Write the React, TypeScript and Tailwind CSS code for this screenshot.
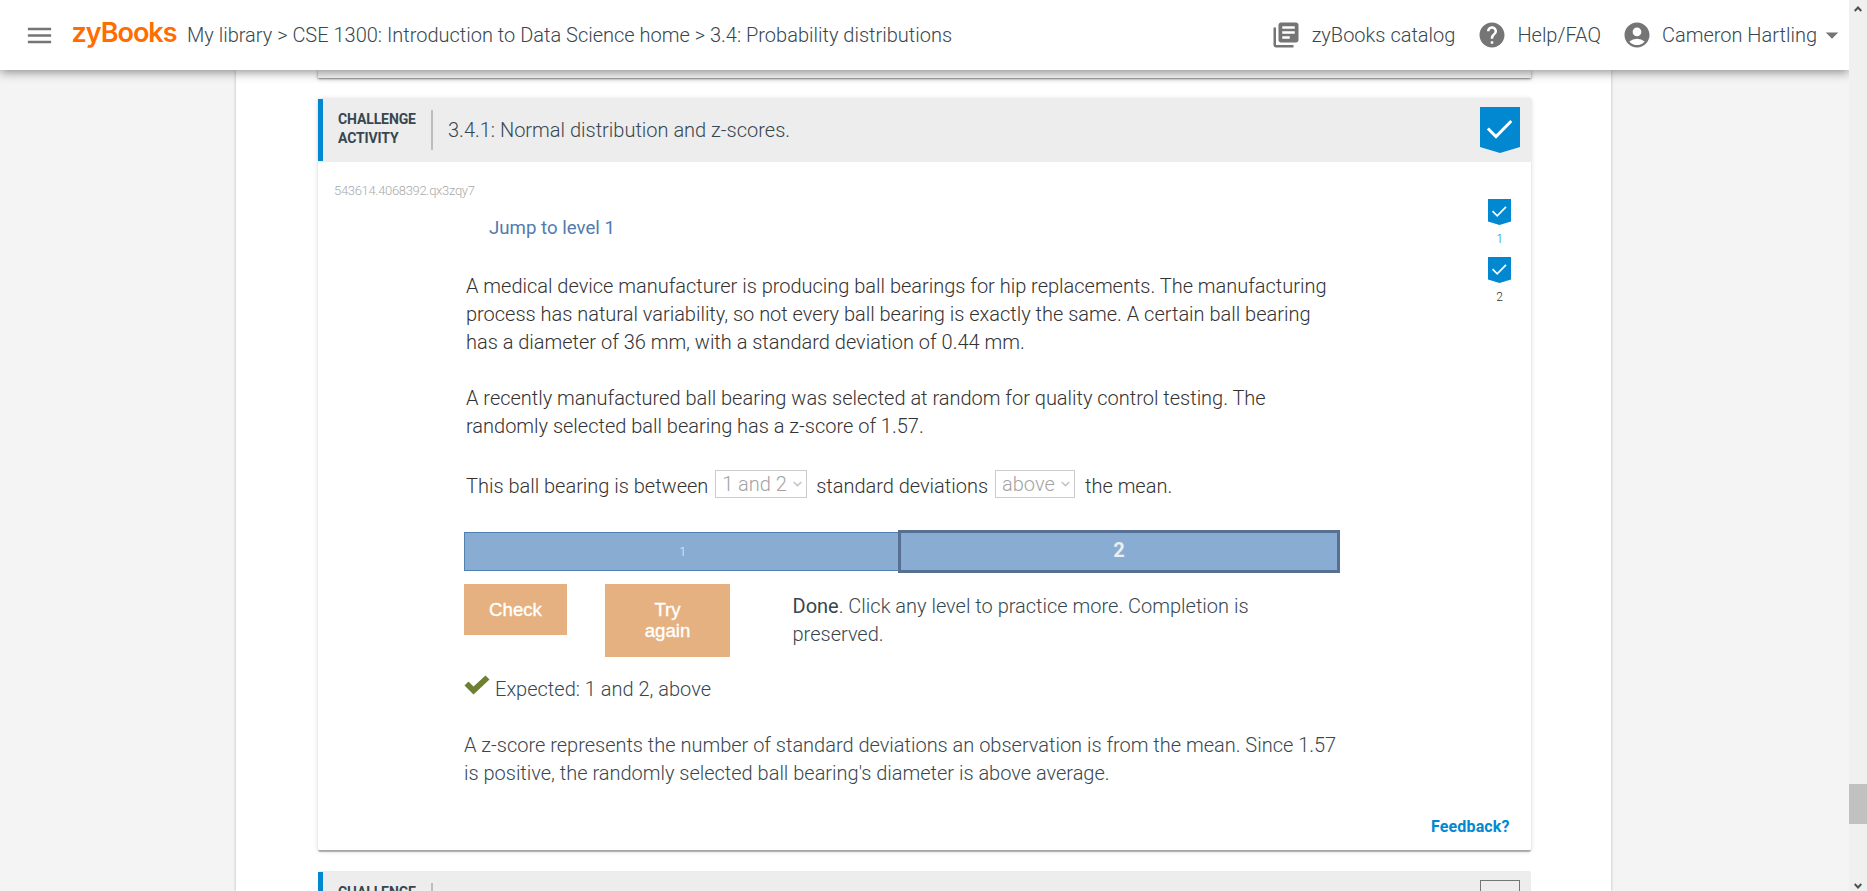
import { MdAccountCircle, MdArrowDropDown, MdHelp, MdLibraryBooks, MdMenu } from "react-icons/md";

function Ribbon({ className }: { className: string }) {
  return (
    <svg viewBox="0 0 40 46" preserveAspectRatio="none" className={className} aria-hidden="true">
      <path d="M0 0H40V40L20 46L0 40Z" fill="#0288d1" />
      <path d="M7.9 21.5L16 29.6L31.3 14" fill="none" stroke="#fff" strokeWidth="2.9" />
    </svg>
  );
}

function TopBar() {
  return (
    <header className="relative z-10 flex h-[70px] shrink-0 items-center bg-white text-[20px] font-light text-[#37474f] shadow-[0_2px_10px_rgba(0,0,0,0.45)]">
      <MdMenu className="ml-[23.5px] size-[31px] text-[#757575]" />
      <svg className="ml-[17.5px] h-[40px] w-[106px] overflow-visible" viewBox="0 0 106 40">
        <text x="-0.5" y="27.3" textLength="106" fontFamily="Inter" fontSize="27" fontWeight="600" fill="#ff6c00">zyBooks</text>
      </svg>
      <span className="ml-[9px] whitespace-nowrap">
        My library &gt; CSE 1300: Introduction to Data Science home &gt; 3.4: Probability distributions
      </span>
      <nav className="ml-auto flex items-center whitespace-nowrap pr-[2px]">
        <MdLibraryBooks className="size-[30px] text-[#757575]" />
        <span className="ml-[11px]">zyBooks catalog</span>
        <MdHelp className="ml-[22px] size-[30px] text-[#757575]" />
        <span className="ml-[10px]">Help/FAQ</span>
        <MdAccountCircle className="ml-[21px] size-[30px] text-[#757575]" />
        <span className="ml-[10px]">Cameron Hartling</span>
        <MdArrowDropDown className="size-[30px] text-[#757575]" />
      </nav>
    </header>
  );
}

function ActivityHeader({ title, done }: { title: string; done: boolean }) {
  return (
    <div className="flex h-[64px] rounded-t-[2px] bg-[#ededed] pt-px">
      <div className="h-[62px] w-[5px] bg-[#0288d1]" />
      <div className="ml-[15px] mt-[11px] w-[93px] text-[14px] leading-[19px] font-bold tracking-[-0.12px] text-[#37474f]">
        CHALLENGE
        <br />
        ACTIVITY
      </div>
      <div className="mt-[11px] h-[40px] w-[2px] bg-[#bdbdbd]" />
      <div className="ml-[15px] mt-[17px] text-[20px] leading-[28px] font-light text-[#37474f]">{title}</div>
      {done ? (
        <Ribbon className="mr-[11px] mt-[8px] ml-auto h-[46px] w-[40px]" />
      ) : (
        <div className="mr-[11px] mt-[8px] ml-auto h-[46px] w-[40px] border border-[#757575]" />
      )}
    </div>
  );
}

function DisabledSelect({ value, className }: { value: string; className: string }) {
  return (
    <span className={"flex h-[28px] items-center justify-between border border-[#cccccc] pl-[6px] pr-[4px] text-[#a3a3a3] " + className}>
      <span className="leading-[26px]">{value}</span>
      <svg viewBox="0 0 9 6" className="h-[6px] w-[9px]">
        <path d="M0.7 1L4.5 4.6L8.3 1" fill="none" stroke="#c4c4c4" strokeWidth="1.5" />
      </svg>
    </span>
  );
}

function Activity() {
  return (
    <section className="relative h-[752px] shrink-0 rounded-[2px] bg-white shadow-[1px_0_0_#ececec,-1px_0_0_#ececec,0_2px_1px_rgba(0,0,0,0.28),0_1px_5px_rgba(0,0,0,0.16)]">
      <ActivityHeader title="3.4.1: Normal distribution and z-scores." done />
      <div className="flex">
        <div className="w-[146px] pl-[16px] pt-[21px] text-[13px] leading-[16px] font-light tracking-[-0.32px] text-[#aaaaaa]">543614.4068392.qx3zqy7</div>
        <div className="w-[877px] pt-[52px]">
          <div className="ml-[25px] text-[18.67px] leading-[28px] text-[#527bac]">Jump to level 1</div>
          <div className="ml-[2px] mt-[30px] text-[20px] leading-[28px] font-light tracking-[-0.01px] whitespace-nowrap text-[#333333]">
            <p>
              A medical device manufacturer is producing ball bearings for hip replacements. The manufacturing
              <br />
              process has natural variability, so not every ball bearing is exactly the same. A certain ball bearing
              <br />
              has a diameter of 36 mm, with a standard deviation of 0.44 mm.
            </p>
            <p className="mt-[28px]">
              A recently manufactured ball bearing was selected at random for quality control testing. The
              <br />
              randomly selected ball bearing has a z-score of 1.57.
            </p>
            <div className="mt-[30px] flex items-start">
              <span className="pt-[2px]">This ball bearing is between</span>
              <DisabledSelect value="1 and 2" className="ml-[6.8px] w-[92px]" />
              <span className="ml-[9px] pt-[2px]">standard deviations</span>
              <DisabledSelect value="above" className="ml-[7px] w-[80px]" />
              <span className="ml-[10px] pt-[2px]">the mean.</span>
            </div>
          </div>
          <div className="mt-[30px] flex h-[43px] items-center">
            <div className="flex h-[39px] w-[434px] items-center justify-center border border-r-0 border-[#5080ad] bg-[#88acd2] pl-[2px] text-[13px] font-light text-[#eeeeee]">1</div>
            <div className="flex h-[43px] w-[442px] items-center justify-center border-[3px] border-[#566f93] bg-[#88acd2] pb-[3px] text-[20px] font-bold text-[#eeeeee]">2</div>
          </div>
          <div className="mt-[11px] flex h-[73px] items-start">
            <button className="h-[51px] w-[103px] bg-[#e5b180] [font-family:'Liberation_Sans',Arial,sans-serif] text-[18.67px] leading-[21px] text-white [-webkit-text-stroke:0.35px_white]">Check</button>
            <button className="ml-[38px] h-[73px] w-[125px] bg-[#e5b180] pb-px [font-family:'Liberation_Sans',Arial,sans-serif] text-[18.67px] leading-[21px] text-white [-webkit-text-stroke:0.35px_white]">
              Try
              <br />
              again
            </button>
            <p className="ml-[62.5px] mt-[8px] text-[20px] leading-[28px] font-light text-[#37474f]">
              <b>Done</b>. Click any level to practice more. Completion is
              <br />
              preserved.
            </p>
          </div>
          <div className="mt-[18px] flex h-[28px] text-[20px] leading-[28px] font-light text-[#37474f]">
            <svg viewBox="0 0 26 20" className="h-[20px] w-[26px]">
              <path d="M0.5 10.5L4.5 6.5L9.5 11.5L21.5 0.5L25.5 4.5L9.5 19.5Z" fill="#6f8033" />
            </svg>
            <span className="ml-[5px]">Expected: 1 and 2, above</span>
          </div>
          <p className="mt-[28px] text-[20px] leading-[28px] font-light tracking-[-0.01px] whitespace-nowrap text-[#37474f]">
            A z-score represents the number of standard deviations an observation is from the mean. Since 1.57
            <br />
            is positive, the randomly selected ball bearing's diameter is above average.
          </p>
          <div className="mt-[28px] ml-[967px] text-[16px] leading-[24px] font-bold tracking-[0.15px] text-[#0288d1]">Feedback?</div>
        </div>
        <div className="ml-[147px] mt-[37px] flex w-[23px] flex-col items-center text-[12px] leading-[14px] font-light">
          <Ribbon className="h-[26px] w-[23px]" />
          <span className="mt-[7px] text-[#0288d1]">1</span>
          <Ribbon className="mt-[11px] h-[26px] w-[23px]" />
          <span className="mt-[7px] text-[#333333]">2</span>
        </div>
      </div>
    </section>
  );
}

function ScrollBar() {
  return (
    <aside className="flex h-full w-[18px] shrink-0 flex-col items-center bg-[#f0f0f0]">
      <svg viewBox="0 0 8 6" className="mt-[6px] h-[6px] w-[8px]">
        <path d="M0.7 5L4 1.5L7.3 5" fill="none" stroke="#505050" strokeWidth="2" />
      </svg>
      <div className="mt-[772px] h-[40px] w-full bg-[#c1c1c1]" />
      <svg viewBox="0 0 8 6" className="mt-[59px] h-[6px] w-[8px]">
        <path d="M0.7 1L4 4.5L7.3 1" fill="none" stroke="#505050" strokeWidth="2" />
      </svg>
    </aside>
  );
}

export default function App() {
  return (
    <div className="flex h-[891px] w-[1867px] overflow-hidden bg-[#f4f4f4] [font-family:Roboto,sans-serif]">
      <div className="flex min-w-0 flex-1 flex-col overflow-hidden">
        <TopBar />
        <main className="ml-[236px] flex h-[821px] w-[1375px] flex-col bg-white pr-[80px] pl-[82px] shadow-[0_0_3px_rgba(0,0,0,0.25)]">
          <div className="h-[8px] shrink-0 bg-[#f5f5f5] shadow-[0_1px_2px_rgba(0,0,0,0.4),0_1px_5px_rgba(0,0,0,0.2)]" />
          <div className="h-[20px] shrink-0" />
          <Activity />
          <div className="mt-[21px] h-[20px] shrink-0">
            <ActivityHeader title="" done={false} />
          </div>
        </main>
      </div>
      <ScrollBar />
    </div>
  );
}
